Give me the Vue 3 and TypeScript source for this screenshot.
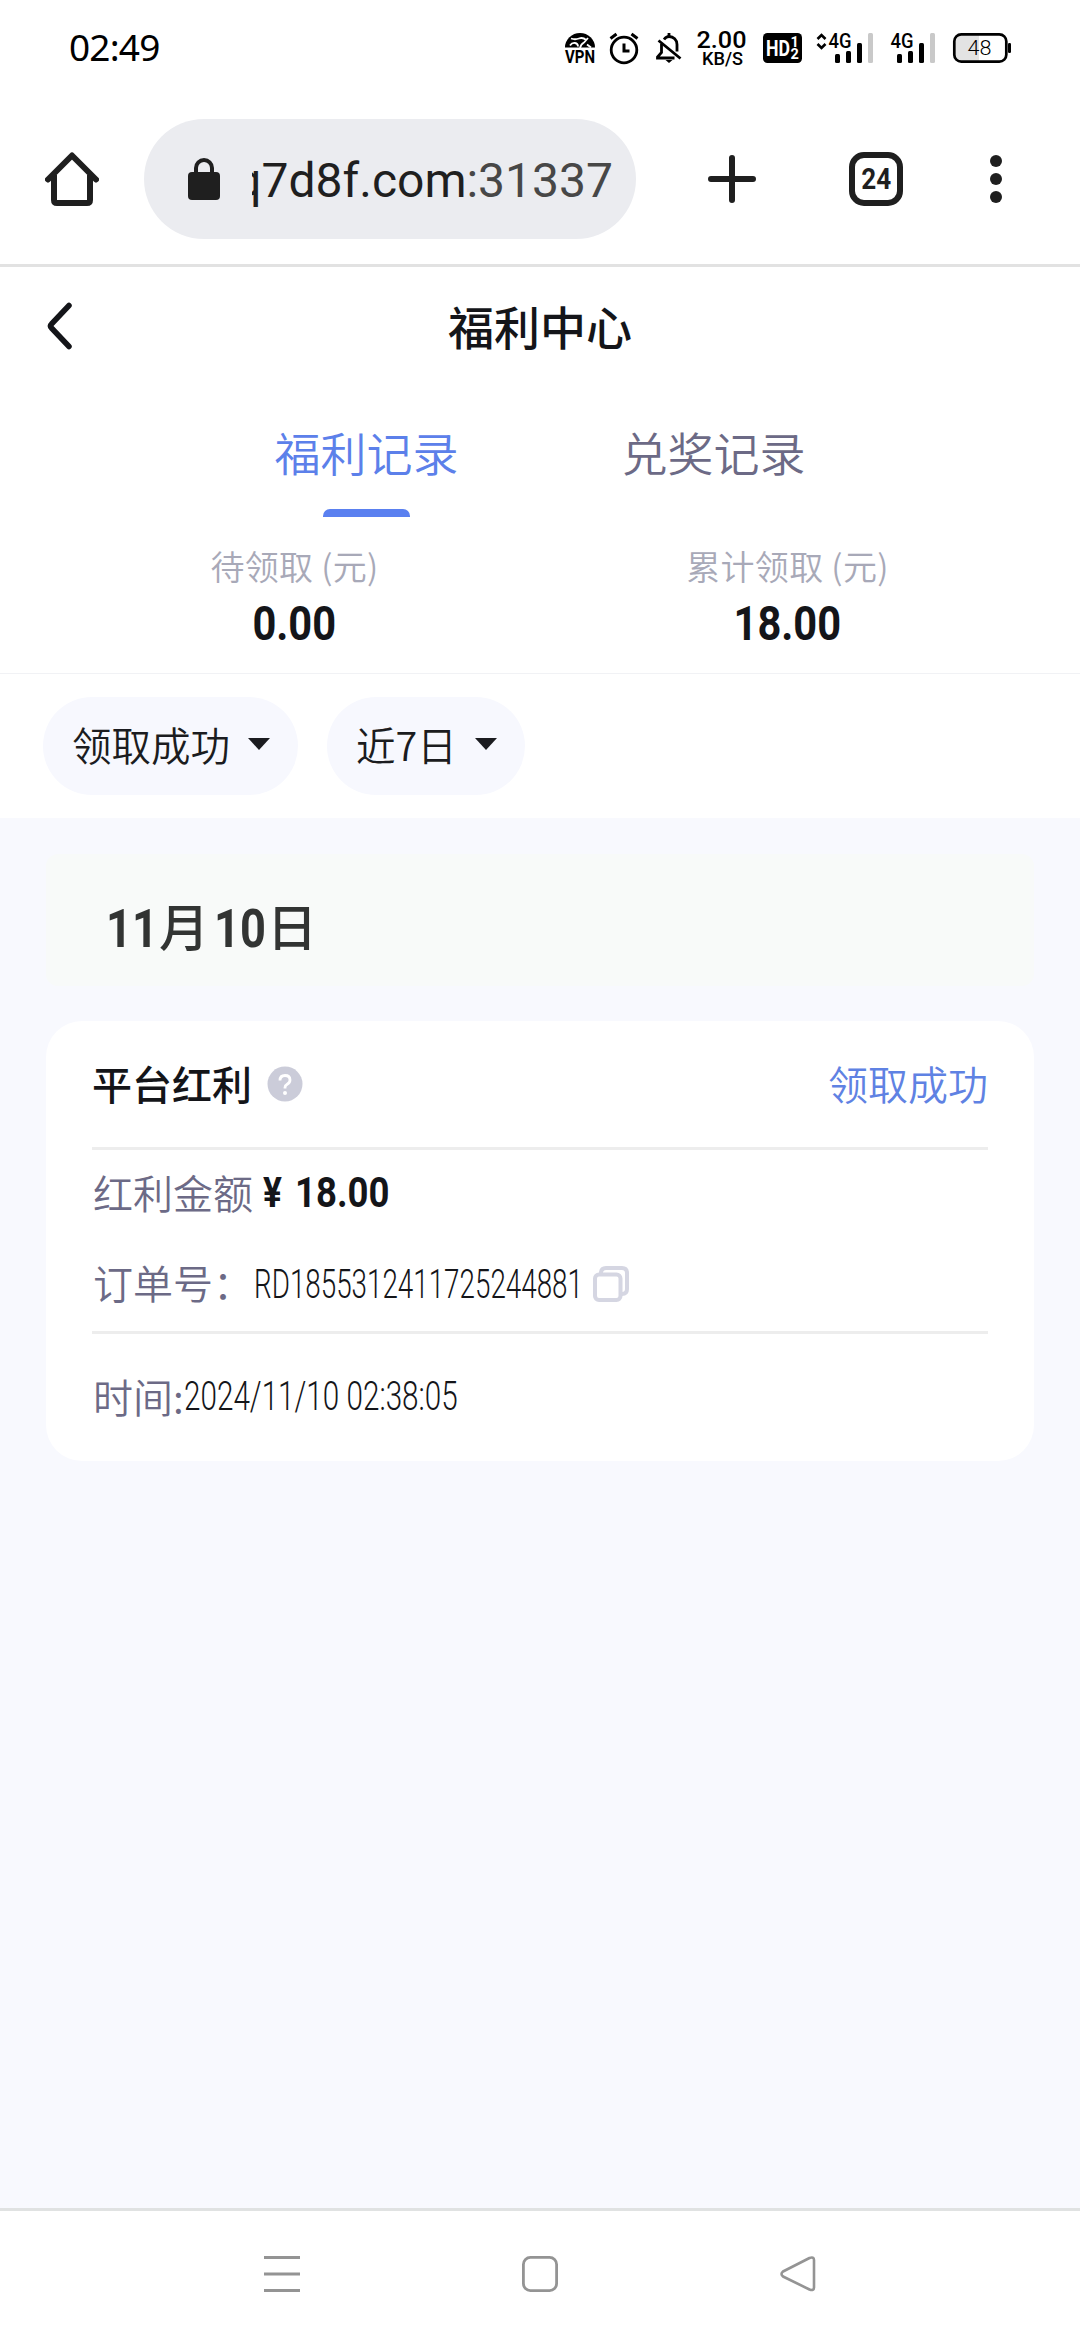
<script setup lang="ts">
interface Stat { label: string; value: string }

const stats: Stat[] = [
  { label: '待领取 (元)', value: '0.00' },
  { label: '累计领取 (元)', value: '18.00' },
]
const tabs: string[] = ['福利记录', '兑奖记录']
const activeTab = 0
const filters: string[] = ['领取成功', '近7日']
const record = {
  title: '平台红利',
  status: '领取成功',
  amount: '18.00',
  order: 'RD1855312411725244881',
  time: '2024/11/10 02:38:05',
}
</script>

<template>
  <div class="screen">
    <header class="status">
      <span class="clock">02:49</span>
      <svg class="status-icons" width="460" height="44" viewBox="560 26 460 44">
        <!-- VPN -->
        <path d="M565 47.5a15 14.5 0 0 1 30 0z" />
        <path d="M570 45.500q2-3 5-2.500t3 3.500M571 38.500q4 1.500 8 0t7 1.500M580 48q1-4 4-5.500l4-4.500M587 44.500l4 3" fill="none" stroke="#fff" stroke-width="1.800" />
        <text x="565" y="63.3" class="b" font-size="17.5" textLength="30" lengthAdjust="spacingAndGlyphs">VPN</text>
        <!-- alarm -->
        <g fill="none" stroke="#000" stroke-width="2.8">
          <circle cx="624" cy="50" r="12.8" />
          <path d="M624 43.5v7.5h5.500" stroke-width="3" />
          <path d="M610.500 38.500l6-4.500M637.500 38.500l-6-4.500" stroke-width="3" />
        </g>
        <!-- muted bell -->
        <g fill="none" stroke="#000" stroke-width="2.8">
          <path d="M661.500 44v8.500l-4 4.500v1h17" />
          <path d="M664 39.500c1.500-2 3-3 5-3 4.500 0 8 3.500 8 8v7" />
          <path d="M669 33v3M658.500 40.500l22 18" />
          <path d="M665.500 60h7l-3.500 3z" fill="#000" stroke="none" />
        </g>
        <!-- network speed -->
        <text x="696.5" y="48" class="m" font-size="24" textLength="50" lengthAdjust="spacingAndGlyphs">2.00</text>
        <text x="702" y="65" class="m" font-size="18" textLength="41" lengthAdjust="spacingAndGlyphs">KB/S</text>
        <!-- HD -->
        <rect x="763" y="33" width="39" height="30" rx="4.500" />
        <text x="766" y="56" class="b" fill="#fff" font-size="22" textLength="24" lengthAdjust="spacingAndGlyphs">HD</text>
        <text x="790.500" y="47" class="b" fill="#fff" font-size="14.500">1</text>
        <text x="790.500" y="58.500" class="b" fill="#fff" font-size="14.500">2</text>
        <!-- mobile signals -->
        <path d="M817.500 39l4-4 4 4M817.500 44l4 4 4-4" fill="none" stroke="#000" stroke-width="2.600" />
        <g v-for="dx in [0, 62]" :key="dx" :transform="`translate(${dx} 0)`">
          <text x="828.500" y="48" class="m" font-size="19.500" textLength="23" lengthAdjust="spacingAndGlyphs">4G</text>
          <rect x="835" y="54" width="5" height="9" rx="1.500" />
          <rect x="846" y="51" width="5" height="12" rx="1.500" />
          <rect x="857" y="43" width="5" height="20" rx="1.500" />
          <rect x="868" y="33" width="5" height="30" rx="1.500" fill="#c9c9c9" />
        </g>
        <!-- battery -->
        <path d="M960 34.500h19v27h-19q-5.500 0-5.500-6v-15q0-6 5.500-6z" fill="#e3e3e3" />
        <rect x="954.300" y="34.300" width="52" height="27.400" rx="7" fill="none" stroke="#000" stroke-width="2.700" />
        <rect x="1008" y="43" width="3" height="10" rx="1.200" />
        <text x="967.500" y="55" class="l" font-size="20" textLength="24" lengthAdjust="spacingAndGlyphs">48</text>
      </svg>
    </header>

    <div class="browser">
      <svg class="home" width="54" height="54" viewBox="0 0 54 54" fill="none" stroke="#1f1f1f" stroke-width="6">
        <path d="M3 27.500L27 3.500l24 24" stroke-linecap="round" stroke-linejoin="round" />
        <path d="M9 23v25q0 3 3 3h30q3 0 3-3V23" />
      </svg>
      <div class="pill">
        <svg width="32" height="42" viewBox="0 0 32 42">
          <rect y="14" width="32" height="28" rx="4" fill="#1f1f1f" />
          <path d="M8 16v-6a8 8 0 0 1 16 0v6" fill="none" stroke="#1f1f1f" stroke-width="4" />
        </svg>
        <div class="url"><span>q7d8f.com<i>:31337</i></span></div>
      </div>
      <svg class="plus" width="48" height="48" viewBox="0 0 48 48" stroke="#1f1f1f" stroke-width="6" stroke-linecap="round">
        <path d="M24 3v42M3 24h42" />
      </svg>
      <div class="count"><span>24</span></div>
      <svg class="more" width="12" height="48" viewBox="0 0 12 48" fill="#1f1f1f">
        <circle cx="6" cy="6" r="6" /><circle cx="6" cy="24" r="6" /><circle cx="6" cy="42" r="6" />
      </svg>
    </div>

    <nav class="title-bar">
      <svg width="28" height="48" viewBox="0 0 28 48" fill="none" stroke="#141519" stroke-width="5.500" stroke-linecap="round" stroke-linejoin="round">
        <path d="M24 3.500L6.500 22q-2 2 0 4L24 44.500" />
      </svg>
      <h1>福利中心</h1>
    </nav>

    <div class="tabs">
      <div v-for="(t, i) in tabs" :key="t" class="tab" :class="{ active: i === activeTab }">{{ t }}</div>
    </div>

    <div class="stats">
      <div v-for="s in stats" :key="s.label" class="stat">
        <span class="stat-label">{{ s.label }}</span>
        <span class="stat-value">{{ s.value }}</span>
      </div>
    </div>

    <div class="filters">
      <button v-for="f in filters" :key="f" class="chip">
        <span>{{ f }}</span>
        <svg width="22" height="12" viewBox="0 0 22 12"><path d="M0 0h22L11 12z" fill="#1b1c20" /></svg>
      </button>
    </div>

    <main class="content">
      <div class="date">
        <span class="num">11</span><span class="cjk">月</span><span class="num">10</span><span class="cjk">日</span>
      </div>
      <section class="card">
        <div class="row head">
          <strong>{{ record.title }}</strong>
          <svg class="help" width="36" height="36" viewBox="0 0 36 36">
            <circle cx="18" cy="18" r="17.500" fill="#cbccd9" />
            <path d="M13 14.500q0-5 5-5t5 4.500q0 2.500-2.500 4T18 21.500v1" fill="none" stroke="#fff" stroke-width="2.800" />
            <circle cx="18" cy="27" r="2" fill="#fff" />
          </svg>
          <span class="state">{{ record.status }}</span>
        </div>
        <div class="row amount">
          <span class="label">红利金额</span><span class="yen">¥</span><span class="money">{{ record.amount }}</span>
        </div>
        <div class="row order">
          <span class="label">订单号：</span><span class="order-no">{{ record.order }}</span>
          <svg class="copy" width="36" height="36" viewBox="0 0 36 36" fill="none" stroke="#d5d6e2" stroke-width="4">
            <path d="M8 7q0-5 5-5h16q5 0 5 5v16q0 5-5 5" />
            <rect x="2" y="8.500" width="25.500" height="25.500" rx="4" />
          </svg>
        </div>
        <div class="row time">
          <span class="label">时间:</span><span class="stamp">{{ record.time }}</span>
        </div>
      </section>
    </main>

    <footer class="keys">
      <svg width="36" height="36" viewBox="0 0 36 36" stroke="#949494" stroke-width="3">
        <path d="M0 1.500h36M0 18h36M0 34.500h36" />
      </svg>
      <svg width="36" height="36" viewBox="0 0 36 36" fill="none" stroke="#949494" stroke-width="2.800">
        <rect x="1.400" y="1.400" width="33.200" height="33.200" rx="7" />
      </svg>
      <svg width="36" height="36" viewBox="0 0 36 36" fill="none" stroke="#949494" stroke-width="2.600" stroke-linejoin="round">
        <path d="M3 15.500L29.500 2Q34 .500 34 4v27.500q0 3.500-4.500 2L3 20.500q-3-2.500 0-5z" />
      </svg>
    </footer>
  </div>
</template>

<style>
body { margin: 0; background: #fff; }
</style>

<style scoped>
.screen {
  display: flex;
  flex-direction: column;
  width: 1080px;
  height: 2340px;
  overflow: hidden;
  background: #fff;
  font-family: "Noto Sans CJK SC", "Noto Sans", sans-serif;
  font-weight: 350;
  color: #141519;
}
.status {
  display: flex;
  align-items: center;
  justify-content: space-between;
  box-sizing: border-box;
  height: 96px;
  padding: 0 60px 0 69px;
}
.clock { padding-bottom: 2px; font: 400 37px/50px "Noto Sans", sans-serif; letter-spacing: -0.8px; color: #000; }
.status-icons text { font-family: Roboto, sans-serif; }
.status-icons .l { font-weight: 300; }
.status-icons .m { font-weight: 500; }
.status-icons .b { font-weight: 700; }

.browser {
  display: flex;
  align-items: center;
  box-sizing: border-box;
  height: 171px;
  padding: 0 78px 3px 45px;
  border-bottom: 3px solid #e2e2e2;
}
.pill {
  display: flex;
  align-items: center;
  box-sizing: border-box;
  width: 492px;
  height: 120px;
  margin-left: 45px;
  padding-left: 44px;
  border-radius: 60px;
  background: #ebecf0;
}
.url {
  display: flex;
  justify-content: flex-end;
  width: 361px;
  margin-left: 32px;
  padding-top: 4px;
  overflow: hidden;
  font: 400 48px/70px Roboto, sans-serif;
  color: #1f1f1f;
}
.url i { font-style: normal; color: #474747; }
.plus { margin-left: 72px; }
.count {
  display: flex;
  align-items: center;
  justify-content: center;
  box-sizing: border-box;
  width: 54px;
  height: 54px;
  margin-left: 93px;
  border: 6px solid #1f1f1f;
  border-radius: 15px;
}
.count span { font: 700 30px/32px Roboto, sans-serif; color: #1f1f1f; transform: scaleX(.87); }
.more { margin-left: auto; }

.title-bar {
  display: grid;
  grid-template-columns: 60px 1fr 60px;
  align-items: center;
  height: 118px;
  padding: 0 45px;
}
h1 { margin: 0; padding-bottom: 3px; text-align: center; font-size: 46px; font-weight: 500; line-height: 60px; }

.tabs { display: flex; justify-content: center; height: 132px; }
.tab {
  display: flex;
  flex-direction: column;
  align-items: center;
  width: 347px;
  padding-top: 36px;
  font-size: 46px;
  line-height: 60px;
  color: #6c6a86;
}
.active { color: #5c80ea; }
.active::after {
  content: "";
  width: 87px;
  height: 8px;
  margin-top: 28px;
  border-radius: 7px 7px 0 0;
  background: #5a80f0;
}

.stats {
  display: flex;
  box-sizing: border-box;
  height: 157px;
  padding: 29px 46px 0 48px;
  border-bottom: 1px solid #f1f2f5;
}
.stat { display: flex; flex: 1; flex-direction: column; align-items: center; }
.stat-label { font-size: 34px; line-height: 40px; letter-spacing: .3px; color: #a8a9b8; }
.stat-value { margin-top: 8px; font: 700 49px/60px Roboto, sans-serif; transform: scaleX(.85); }

.filters { display: flex; gap: 29px; height: 98px; padding: 23px 43px; }
.chip {
  display: flex;
  align-items: center;
  gap: 18px;
  padding: 0 28px 0 29px;
  border: 0;
  border-radius: 49px;
  background: #f7f8fe;
  font: 350 39.500px/50px "Noto Sans CJK SC", sans-serif;
  color: #1b1c20;
}
.chip span { padding-bottom: 4px; }
.chip svg { margin-bottom: 4px; }

.content { flex: 1; padding: 36px 46px 0; background: #f8f9fe; }
.date {
  display: flex;
  align-items: center;
  box-sizing: border-box;
  height: 132px;
  padding: 12px 0 0 60px;
  border-radius: 12px;
  background: #f8faf9;
  color: #323433;
}
.num { width: 53px; padding-top: 3px; font: 700 54.500px/70px Roboto, sans-serif; transform: scaleX(.83); transform-origin: left; }
.cjk { width: 55px; padding-bottom: 4px; font-size: 50px; font-weight: 500; line-height: 70px; }
.card {
  box-sizing: border-box;
  height: 440px;
  margin-top: 35px;
  padding: 0 46px;
  border-radius: 36px;
  background: #fff;
}
.row { display: flex; align-items: center; box-sizing: border-box; font-size: 40px; line-height: 56px; }
.head { height: 129px; border-bottom: 3px solid #ededed; }
.head strong { padding-bottom: 3px; font-weight: 500; }
.help { margin-left: 15px; }
.state { margin-left: auto; padding-bottom: 3px; color: #5f82e3; }
.label { padding: 0 0 4px 1px; color: #6c6a86; }
.amount { height: 87px; }
.yen, .money, .order-no, .stamp { font-family: Roboto, sans-serif; transform-origin: left; }
.yen { margin-left: 10px; width: 32px; padding-bottom: 2px; font-size: 42px; font-weight: 700; transform: scaleX(.84); }
.money { padding-bottom: 3px; font-size: 43px; font-weight: 700; transform: scaleX(.85); }
.order { height: 97px; border-bottom: 3px solid #ededed; }
.order-no { width: 339px; margin-left: 1px; font-size: 41.500px; font-weight: 300; transform: scaleX(.67); white-space: nowrap; }
.copy { flex: none; }
.time { height: 127px; }
.stamp { padding-bottom: 4px; font-size: 41.500px; font-weight: 300; transform: scaleX(.715); white-space: nowrap; }

.keys {
  display: flex;
  justify-content: space-between;
  box-sizing: border-box;
  height: 132px;
  padding: 45px 264px 0;
  border-top: 3px solid #e0e2e2;
}
</style>
